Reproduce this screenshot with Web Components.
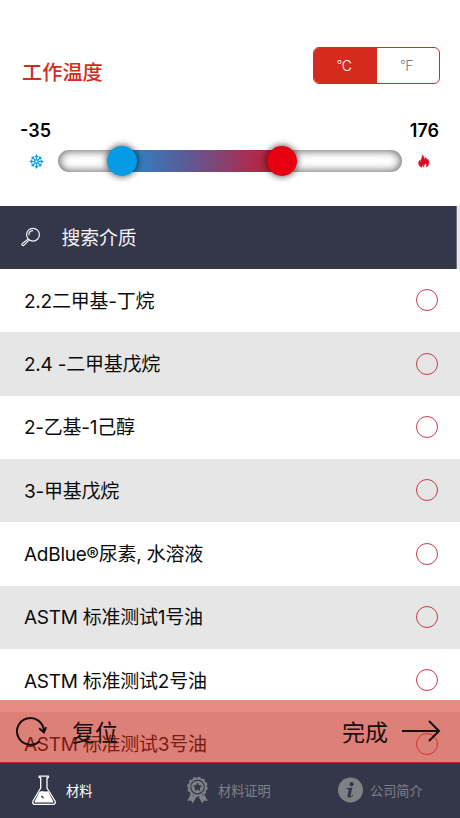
<!DOCTYPE html>
<html lang="zh-CN">
<head>
<meta charset="UTF-8">
<meta name="viewport" content="width=device-width, initial-scale=1">
<title>工作温度</title>
<style>
    html, body {
        margin: 0;
        height: 100%;
        overflow: hidden;
    }

    body {
        background: #fff;
        color: #0b0b0b;
        font-family: Inter, "Noto Sans CJK SC", sans-serif;
    }
</style>
</head>
<body>
<material-app></material-app>

<script>
// Shared base: puts the markup of a component into its open shadow root
class BaseElement extends HTMLElement {
    connectedCallback() {
        if (this.shadowRoot) return;
        this.attachShadow({ mode: 'open' });
        this.shadowRoot.innerHTML = this.render();
    }
}

class UnitSwitch extends BaseElement {
    render() {
        return `
            <style>
                :host {
                    display: flex;
                    box-sizing: border-box;
                    width: 127px;
                    height: 37px;
                    border: 1px solid #d52b1e;
                    border-radius: 6px;
                    overflow: hidden;
                    font-size: 14px;
                    font-weight: 300;
                }

                span {
                    flex: 1;
                    display: flex;
                    align-items: center;
                    justify-content: center;
                    padding-right: 2px;
                    color: #777;
                }

                .on {
                    background: #d52b1e;
                    color: #fff;
                }

                i {
                    font-style: normal;
                    font-size: 12px;
                    margin-top: -3px;
                    width: 5px;
                }
            </style>
            <span class="on"><i>°</i>C</span>
            <span><i>°</i>F</span>
        `;
    }
}

class TemperatureRange extends BaseElement {
    render() {
        return `
            <style>
                :host {
                    display: block;
                }

                .values {
                    display: flex;
                    justify-content: space-between;
                    padding: 0 21px 0 20px;
                    font-size: 18px;
                    font-weight: 600;
                    line-height: 22px;
                    color: #000;
                }

                .line {
                    display: flex;
                    align-items: center;
                    height: 38px;
                    padding: 0 29px;
                }

                svg {
                    display: block;
                    flex: none;
                }

                .track {
                    position: relative;
                    flex: 1;
                    height: 22px;
                    margin: 0 15px 0 14px;
                    border-radius: 11px;
                    background: #fff;
                    box-shadow: inset 0 0 8px 1px rgba(0, 0, 0, 0.62);
                }

                .fill {
                    position: absolute;
                    left: 64px;
                    right: 120px;
                    top: 0;
                    bottom: 0;
                    background: linear-gradient(90deg, #258acb, #5f5895 42%, #aa2e50 80%, #bd1b34);
                }

                .thumb {
                    position: absolute;
                    top: -4px;
                    width: 30px;
                    height: 30px;
                    border-radius: 50%;
                    box-shadow: 0 0 6px 1px rgba(0, 0, 0, 0.6);
                }

                .cold {
                    left: 49px;
                    background: #059ce5;
                }

                .hot {
                    right: 105px;
                    background: #e60012;
                }
            </style>
            <div class="values"><span>-35</span><span>176</span></div>
            <div class="line">
                <svg width="15" height="15" viewBox="0 0 15 15" fill="none" stroke="#139fdf" stroke-width="1.2">
                    <defs>
                        <g id="arm"><path d="M7.5 5.8V.6M5.9 1.9 7.5 3.4 9.1 1.9"/></g>
                    </defs>
                    <circle cx="7.5" cy="7.5" r="1.7"/>
                    <use href="#arm"/>
                    <use href="#arm" transform="rotate(45 7.5 7.5)"/>
                    <use href="#arm" transform="rotate(90 7.5 7.5)"/>
                    <use href="#arm" transform="rotate(135 7.5 7.5)"/>
                    <use href="#arm" transform="rotate(180 7.5 7.5)"/>
                    <use href="#arm" transform="rotate(225 7.5 7.5)"/>
                    <use href="#arm" transform="rotate(270 7.5 7.5)"/>
                    <use href="#arm" transform="rotate(315 7.5 7.5)"/>
                </svg>
                <div class="track">
                    <div class="fill"></div>
                    <div class="thumb cold"></div>
                    <div class="thumb hot"></div>
                </div>
                <svg width="14" height="14" viewBox="0 0 14 14" fill="#dc0b22" stroke="#dc0b22" stroke-width=".4">
                    <path d="M5 1C6.8 2 7.6 3.6 7.2 5.6 8.3 4.9 8.3 4 8.2 3.2 9.7 4.2 10.1 5.1 9.9 6.4 10.6 6 10.8 5.6 10.8 5 12.8 7.5 12.6 11.8 8.9 13.1 9.8 11.8 9.7 10.2 8.5 9 8.5 10.5 6.7 10.5 7.1 13.2 6.2 12.6 6 11.5 6.3 10.4 5.2 10.9 4.8 12.2 5.2 13.3 1 12.5.9 8.3 2.8 6 2.8 7 3 7.6 3.6 8 3.2 5.3 6 4 5 1Z"/>
                </svg>
            </div>
        `;
    }
}

class SearchBar extends BaseElement {
    render() {
        return `
            <style>
                :host {
                    display: flex;
                    align-items: center;
                    box-sizing: border-box;
                    height: 63px;
                    padding: 0 0 2px 21px;
                    margin-right: 3px;
                    gap: 20.5px;
                    border-right: 1px solid #6d6f7c;
                    background: #34374a;
                    color: #f4f4f8;
                    font-size: 18.8px;
                }
            </style>
            <svg width="20" height="20" viewBox="0 0 20 20" fill="none" stroke="#f4f4f8" stroke-width="1.2" stroke-linecap="round" stroke-linejoin="round">
                <circle cx="12" cy="7.7" r="6.4"/>
                <path d="M7.9 7.6C8 5.3 9.5 3.9 11.6 3.7"/>
                <path d="M7 12.1 1.2 16.8C.3 17.7 1.9 19.3 2.8 18.4L8 13.1"/>
            </svg>
            <slot></slot>
        `;
    }
}

class MediumRow extends BaseElement {
    render() {
        return `
            <style>
                :host {
                    display: flex;
                    align-items: center;
                    justify-content: space-between;
                    flex: none;
                    box-sizing: border-box;
                    height: 63.35px;
                    padding: 0 22px 0 24px;
                    font-size: 19px;
                    letter-spacing: -0.25px;
                    line-height: 28px;
                    white-space: pre;
                }

                :host(:nth-child(even)) {
                    background: #e6e6e6;
                }

                span {
                    padding-top: 2px;
                }

                i {
                    box-sizing: border-box;
                    width: 22px;
                    height: 22px;
                    margin-bottom: 1px;
                    border: 1px solid #cb3a50;
                    border-radius: 50%;
                }
            </style>
            <span><slot></slot></span><i></i>
        `;
    }
}

class ActionBar extends BaseElement {
    render() {
        return `
            <style>
                :host {
                    display: flex;
                    align-items: center;
                    justify-content: space-between;
                    box-sizing: border-box;
                    height: 63px;
                    padding: 0 19px 0 15px;
                    background: rgba(213, 43, 30, 0.55);
                    border-bottom: 1px solid #b32a28;
                    color: #161010;
                    font-size: 23px;
                }

                div {
                    display: flex;
                    align-items: center;
                }

                svg {
                    display: block;
                }
            </style>
            <div style="gap: 24px">
                <svg width="33" height="32" viewBox="0 0 33 32" fill="none" stroke="#161010" stroke-width="2">
                    <path d="M24.5 26.2A13.4 13.4 0 1 1 28.8 16"/>
                    <path d="M24.1 13.2 28.9 17.3 31.2 12.1"/>
                </svg>
                <span>复位</span>
            </div>
            <div style="gap: 13px">
                <span>完成</span>
                <svg width="40" height="24" viewBox="0 0 40 24" fill="none" stroke="#161010" stroke-width="2">
                    <path d="M1 12H38M28 2 38 12 28 22"/>
                </svg>
            </div>
        `;
    }
}

class TabItem extends BaseElement {
    render() {
        return `
            <style>
                :host {
                    display: flex;
                    align-items: center;
                    padding-bottom: 1px;
                    color: #7f8086;
                    font-size: 13.2px;
                }

                :host([active]) {
                    color: #fff;
                }
            </style>
            <slot name="icon"></slot>
            <slot></slot>
        `;
    }
}

class TabBar extends BaseElement {
    render() {
        return `
            <style>
                :host {
                    display: grid;
                    grid-template-columns: 154px 152px 1fr;
                    flex: none;
                    height: 55px;
                    background: #34374a;
                }

                svg {
                    display: block;
                }
            </style>
            <tab-item active style="padding-left: 31px; gap: 9px">
                <svg slot="icon" width="26" height="31" viewBox="0 0 26 31" fill="none" stroke="#fff" stroke-width="1.3" stroke-linejoin="round">
                    <path d="M8.2 2.1V1.2H17.4V2.6H16V13L24 26C24.8 28 24 29.4 22 29.4H4C2 29.4 1.2 28 2 26L9.7 13V2.6H8.2Z"/>
                    <path d="M9 17.2C11 16 13 18 16.8 17L21.7 26.8H4.2Z" fill="#fff"/>
                    <path d="M9.8 21.2C12.2 20.8 13 21.6 12.4 24L11.1 22.7Z" fill="#34374a" stroke="none"/>
                </svg>材料
            </tab-item>
            <tab-item style="padding-left: 32px; gap: 9px">
                <svg slot="icon" width="23" height="28" viewBox="0 0 23 28" fill="#808184">
                    <path d="M4.7 18.5 1.2 25 5 24.4 6.7 27.5 10.2 21ZM18.3 18.5 21.8 25 18 24.4 16.3 27.5 12.8 21Z"/>
                    <circle cx="11.5" cy="11" r="9.2" stroke="#808184" stroke-width="2" stroke-dasharray="3 1.8"/>
                    <circle cx="11.5" cy="11" r="9"/>
                    <circle cx="11.5" cy="11" r="6.8" fill="none" stroke="#34374a" stroke-width="1.2"/>
                    <path d="M11.5 6.3 12.9 9.3 16.2 9.7 13.8 12 14.4 15.2 11.5 13.6 8.6 15.2 9.2 12 6.8 9.7 10.1 9.3Z" fill="#34374a"/>
                </svg>材料证明
            </tab-item>
            <tab-item style="padding-left: 32px; gap: 7px">
                <svg slot="icon" width="25" height="26" viewBox="0 0 25 26">
                    <circle cx="12.5" cy="13" r="12.5" fill="#808184"/>
                    <circle cx="13.6" cy="7.2" r="2.1" fill="#34374a"/>
                    <path d="M8.3 11.2 14.3 10.4 12.6 18.4C12.4 19.5 13.6 18.9 14.9 17.4L15.4 17.9C13.2 20.9 9 21.7 9.4 18.7L10.7 12.4 8.2 12Z" fill="#34374a"/>
                </svg>公司简介
            </tab-item>
        `;
    }
}

class MaterialApp extends BaseElement {
    render() {
        return `
            <style>
                :host {
                    display: flex;
                    flex-direction: column;
                    height: 818px;
                    position: relative;
                    overflow: hidden;
                }

                header {
                    flex: none;
                    box-sizing: border-box;
                    height: 206px;
                    padding-top: 47px;
                }

                .top {
                    display: flex;
                    justify-content: space-between;
                    padding: 0 20px 0 22px;
                    height: 73px;
                }

                h1 {
                    margin: 11px 0 0;
                    color: #d52b1e;
                    font-size: 20.2px;
                    font-weight: 500;
                    line-height: 30px;
                }

                main {
                    flex: 1;
                    min-height: 0;
                    overflow: hidden;
                    display: flex;
                    flex-direction: column;
                }

                .search {
                    flex: none;
                    background: #e5e5e8;
                }

                /* floats over the last rows of the list */
                action-bar {
                    position: absolute;
                    left: 0;
                    right: 0;
                    bottom: 55px;
                }
            </style>
            <header>
                <div class="top">
                    <h1>工作温度</h1>
                    <unit-switch></unit-switch>
                </div>
                <temperature-range></temperature-range>
            </header>
            <div class="search"><search-bar>搜索介质</search-bar></div>
            <main>
                <medium-row>2.2二甲基-丁烷</medium-row>
                <medium-row>2.4 -二甲基戊烷</medium-row>
                <medium-row>2-乙基-1己醇</medium-row>
                <medium-row>3-甲基戊烷</medium-row>
                <medium-row>AdBlue®尿素, 水溶液</medium-row>
                <medium-row>ASTM 标准测试1号油</medium-row>
                <medium-row>ASTM 标准测试2号油</medium-row>
                <medium-row>ASTM 标准测试3号油</medium-row>
            </main>
            <action-bar></action-bar>
            <tab-bar></tab-bar>
        `;
    }
}

customElements.define('unit-switch', UnitSwitch);
customElements.define('temperature-range', TemperatureRange);
customElements.define('search-bar', SearchBar);
customElements.define('medium-row', MediumRow);
customElements.define('action-bar', ActionBar);
customElements.define('tab-item', TabItem);
customElements.define('tab-bar', TabBar);
customElements.define('material-app', MaterialApp);
</script>
</body>
</html>
